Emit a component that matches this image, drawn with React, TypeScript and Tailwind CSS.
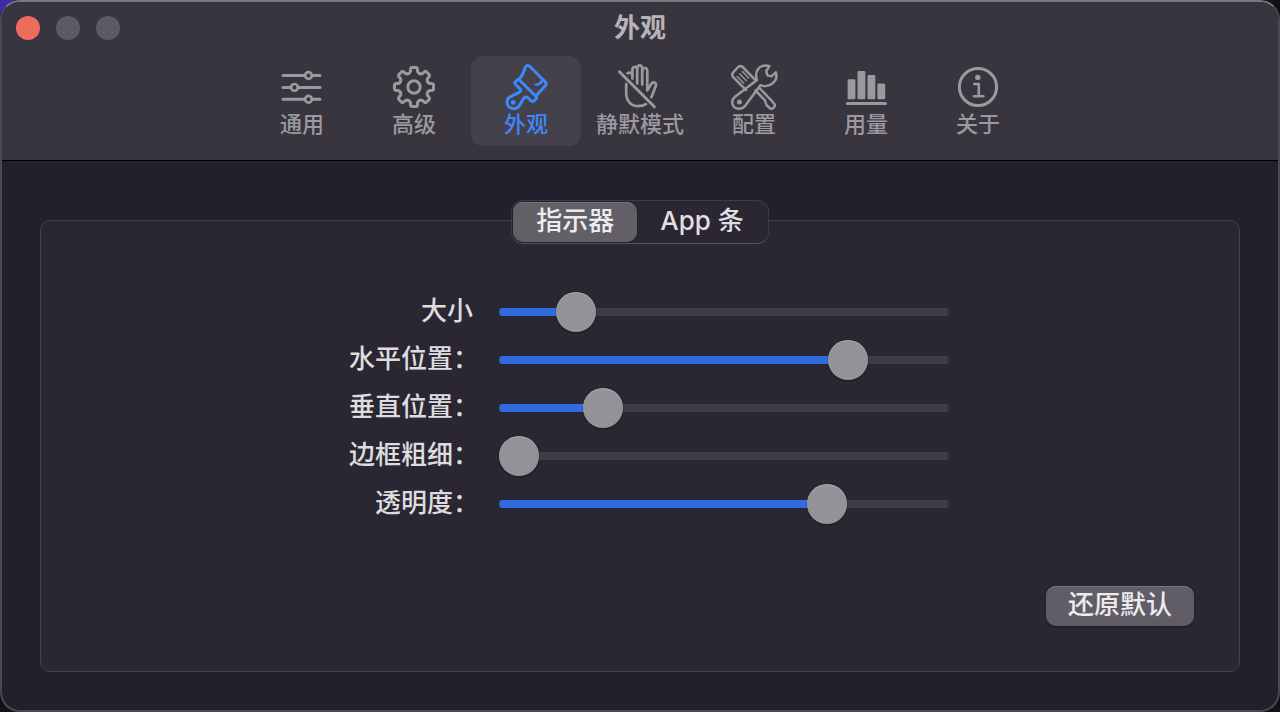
import { useState } from 'react';
import type { CSSProperties, ReactNode } from 'react';

function gearPath(cx: number, cy: number): string {
  const point = (r: number, deg: number) => {
    const a = (deg * Math.PI) / 180;
    return `${(cx + r * Math.sin(a)).toFixed(2)} ${(cy - r * Math.cos(a)).toFixed(2)}`;
  };
  let d = '';
  for (let k = 0; k < 8; k += 1) {
    const a = k * 45;
    d += `${k === 0 ? 'M' : 'L'}${point(18, a - 11)} Q${point(19.6, a - 10)} ${point(19.6, a - 6)}`;
    d += ` L${point(19.6, a + 6)} Q${point(19.6, a + 10)} ${point(18, a + 11)}`;
    d += ` L${point(15.8, a + 13)} Q${point(13.4, a + 22.5)} ${point(15.8, a + 32)} `;
  }
  return `${d}Z`;
}

function Icon({ children }: { children: ReactNode }) {
  return (
    <svg
      viewBox="0 0 48 48"
      className="size-12 shrink-0"
      fill="none"
      stroke="currentColor"
      strokeWidth="3"
      strokeLinecap="round"
      strokeLinejoin="round"
      aria-hidden="true"
    >
      {children}
    </svg>
  );
}

const icons = {
  general: (
    <Icon>
      <path d="M5 13.5H27M34 13.5H42M5 25.4H13M20 25.4H42M5 37.3H27M34 37.3H42" />
      <g strokeWidth="2.6">
        <circle cx="30.5" cy="13.5" r="3.4" />
        <circle cx="16.5" cy="25.4" r="3.4" />
        <circle cx="30.5" cy="37.3" r="3.4" />
      </g>
    </Icon>
  ),
  advanced: (
    <Icon>
      <path d={gearPath(24, 25)} />
      <circle cx="24" cy="25" r="6.2" />
    </Icon>
  ),
  appearance: (
    <Icon>
      <path d="M16.5 17.5C20.5 14.8 21.6 9.5 23.2 5.6Q24.6 2.4 27.6 4.2L43.2 19.8Q45 21.8 43.2 23.8L35.2 32.6" />
      <path d="M17.6 18.2L34 34.4Q35.2 35.8 34 37L31.6 39.2Q30.4 40.2 29.2 39L26.2 36Q23.4 33.6 21.6 36.6L17 44.2C14.6 47.4 9.6 47.4 6.8 44.6C4 41.4 4.6 36.8 8.2 34.8L17 30.4Q19.8 28.8 17.8 26.6L13.4 22.2Q12.4 21 13.4 19.8L15.6 17.8Q16.6 17.2 17.6 18.2Z" />
      <path d="M39.4 17.4Q38 22 32.4 22.6Q35.6 25 40.4 20.8Z" fill="currentColor" strokeWidth="1" />
      <circle cx="11.2" cy="40.4" r="2.4" fill="currentColor" stroke="none" />
    </Icon>
  ),
  silent: (
    <Icon>
      <g strokeWidth="2.7">
        <path d="M3.4 9.8L38.4 44.8" strokeWidth="3" />
        <path d="M11.6 11.2Q15 9.6 16.4 13V16.6" />
        <path d="M16.4 13V7.2Q16.8 4.8 18.8 4.8T21.2 7.2V21.4" />
        <path d="M21.2 7V5.8Q21.6 3.4 23.7 3.4T26.2 5.8V22.6" />
        <path d="M26.2 9V8.2Q26.6 6 28.8 6T31.3 8.4V28.4L35.4 21.8Q36.8 19.8 38.8 20.8Q40.6 21.8 39.8 24L35.4 35.2" />
        <path d="M10.2 22V31C10.2 39 15.2 44.2 22.2 44.2Q26.6 44.2 30 42.2" />
      </g>
    </Icon>
  ),
  config: (
    <Icon>
      <g strokeWidth="2.5">
        <path d="M16 28.2L3 14.8Q1.4 12.6 3 10.6L8.2 5Q10.4 3.2 12.6 5L25 17.6" />
        <path d="M7.2 14.4L13.8 21.2M9.8 12L16.4 18.8M12.4 9.6L18.6 16" strokeWidth="1.4" />
        <path d="M25.4 28.4L35 38.4L36.4 43L40 46.2Q41.6 47.4 43 46.2L44.4 44.8Q45.6 43.4 44.2 41.8L41 38L38.2 35.2L29.4 26" />
        <path d="M39.4 4.2C34.8 2.4 29.8 4 27.4 8C25.6 11.2 25.8 14.8 27 18L5 34.8C1.6 37.8 1.4 42.2 4 44.8C7 47.6 11.8 47.4 14.6 44.4L30.4 23.2C34.6 24.8 40 24 43.4 20.6C46.2 17.8 47 13.6 45.8 10.4L41.4 14.4L37.4 13.4L36.2 9.2Z" />
        <circle cx="9.4" cy="40" r="2.5" fill="currentColor" stroke="none" />
      </g>
    </Icon>
  ),
  usage: (
    <Icon>
      <g fill="currentColor" stroke="none">
        <rect x="5.6" y="17.2" width="7.8" height="20" rx="1.2" />
        <rect x="15.5" y="9" width="7.8" height="28.2" rx="1.2" />
        <rect x="25.5" y="13" width="7.8" height="24.2" rx="1.2" />
        <rect x="35.4" y="21.6" width="7.8" height="15.6" rx="1.2" />
      </g>
      <path d="M5.4 41.4H43.4" />
    </Icon>
  ),
  about: (
    <Icon>
      <circle cx="24" cy="25" r="18.6" />
      <circle cx="23.8" cy="15.4" r="2.7" fill="currentColor" stroke="none" />
      <path d="M20.2 22H24.8V34.2M19.8 34.2H29.4" strokeWidth="2.6" />
    </Icon>
  ),
};

type TabId = keyof typeof icons;

const tabs: { id: TabId; label: string }[] = [
  { id: 'general', label: '通用' },
  { id: 'advanced', label: '高级' },
  { id: 'appearance', label: '外观' },
  { id: 'silent', label: '静默模式' },
  { id: 'config', label: '配置' },
  { id: 'usage', label: '用量' },
  { id: 'about', label: '关于' },
];

const segments = ['指示器', 'App 条'];

const defaults = [
  { id: 'size', label: '大小', value: 139 },
  { id: 'horizontal', label: '水平位置：', value: 802 },
  { id: 'vertical', label: '垂直位置：', value: 205 },
  { id: 'border', label: '边框粗细：', value: 0 },
  { id: 'opacity', label: '透明度：', value: 751 },
];

function SliderRow({
  id,
  label,
  value,
  onChange,
}: {
  id: string;
  label: string;
  value: number;
  onChange: (value: number) => void;
}) {
  return (
    <div className="flex h-12 items-center gap-[26px]">
      <label
        htmlFor={id}
        className={`flex-1 whitespace-nowrap pb-[2px] text-right text-[26px] font-medium leading-10 text-[#dddcde] ${
          label.endsWith('：') ? '-mr-[6px]' : ''
        }`}
      >
        {label}
      </label>
      <input
        id={id}
        type="range"
        min={0}
        max={1000}
        value={value}
        onChange={(e) => onChange(Number(e.target.value))}
        style={{ '--fill': `${value / 10}%` } as CSSProperties}
        className="h-10 w-3/4 max-w-[450px] cursor-default appearance-none bg-transparent [&::-webkit-slider-runnable-track]:h-2 [&::-webkit-slider-runnable-track]:rounded-full [&::-webkit-slider-runnable-track]:bg-[linear-gradient(to_right,#306ce0_var(--fill),#3f3b47_var(--fill))] [&::-webkit-slider-thumb]:-mt-4 [&::-webkit-slider-thumb]:size-10 [&::-webkit-slider-thumb]:appearance-none [&::-webkit-slider-thumb]:rounded-full [&::-webkit-slider-thumb]:bg-[#949297] [&::-webkit-slider-thumb]:shadow-[0_1px_2px_rgba(0,0,0,0.4),inset_0_1px_1px_rgba(255,255,255,0.25)]"
      />
    </div>
  );
}

export default function App() {
  const [tab, setTab] = useState<TabId>('appearance');
  const [segment, setSegment] = useState(0);
  const [values, setValues] = useState(defaults.map((s) => s.value));

  return (
    <div className="flex min-h-screen bg-[#121117] bg-[radial-gradient(circle_at_top_left,#3a2ba8_0,#3a2ba8_12px,transparent_30px)] font-['Inter','Noto_Sans_CJK_SC',sans-serif]">
      <div className="flex flex-1 flex-col overflow-hidden rounded-[20px] border-2 border-[#4b4851] border-t-[#79767d] bg-[#231f2c]">
        <header className="border-b border-black bg-[#39353e] pb-[14px]">
          <div className="grid h-[54px] grid-cols-[1fr_auto_1fr] items-center px-[14px] pb-[2px]">
            <div className="flex gap-4">
              <button type="button" aria-label="关闭" className="size-6 rounded-full bg-[#ee6a5f]" />
              <button type="button" aria-label="最小化" className="size-6 rounded-full bg-[#5d5a64]" />
              <button type="button" aria-label="缩放" className="size-6 rounded-full bg-[#5d5a64]" />
            </div>
            <h1 className="text-[26px] font-bold leading-9 text-[#b6b4b9]">外观</h1>
          </div>
          <nav className="flex justify-center gap-[2px]">
            {tabs.map(({ id, label }) => (
              <button
                key={id}
                type="button"
                aria-pressed={tab === id}
                onClick={() => setTab(id)}
                className={`flex min-w-[110px] flex-col items-center rounded-xl px-[13px] pb-2 pt-[6px] text-[22px] font-medium leading-7 ${
                  tab === id ? 'bg-[#45414a] text-[#3d88fb]' : 'text-[#9b999f]'
                }`}
              >
                {icons[id]}
                {label}
              </button>
            ))}
          </nav>
        </header>

        <main className="flex flex-1 px-[38px] pb-[38px] pt-[59px]">
          <section className="flex flex-1 flex-col items-center rounded-[10px] border border-[#45414c] bg-[#2a2632]">
            <div className="-mt-[21px] flex h-11 rounded-xl border border-[#3f3b47] border-b-[#56535d] bg-[#2a2632] p-px">
              {segments.map((name, i) => (
                <button
                  key={name}
                  type="button"
                  aria-pressed={segment === i}
                  onClick={() => setSegment(i)}
                  className={`rounded-[10px] px-[23px] pb-[2px] text-[26px] font-medium leading-9 ${
                    segment === i
                      ? 'bg-[#625f67] text-[#ecebed] shadow-[0_0_2px_rgba(0,0,0,0.5),inset_0_1px_0_#77747b]'
                      : 'text-[#e0dfe1]'
                  }`}
                >
                  {name}
                </button>
              ))}
            </div>

            <div className="mt-11 w-full max-w-[618px]">
              {defaults.map((s, i) => (
                <SliderRow
                  key={s.id}
                  id={s.id}
                  label={s.label}
                  value={values[i]}
                  onChange={(v) => setValues((prev) => prev.map((old, j) => (j === i ? v : old)))}
                />
              ))}
            </div>

            <button
              type="button"
              onClick={() => setValues(defaults.map((s) => s.value))}
              className="mb-[45px] mr-[45px] mt-auto h-10 self-end rounded-[10px] bg-[#605d66] px-[22px] pb-[2px] text-[26px] font-medium leading-9 text-[#ecebed] shadow-[0_1px_2px_rgba(0,0,0,0.4),inset_0_1px_0_#77747b]"
            >
              还原默认
            </button>
          </section>
        </main>
      </div>
    </div>
  );
}
